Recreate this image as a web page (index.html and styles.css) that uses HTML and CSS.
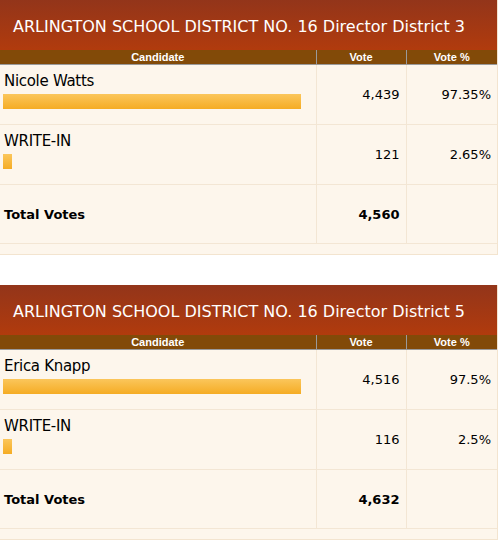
FILE: index.html
```html
<!DOCTYPE html>
<html>
<head>
<meta charset="utf-8">
<link rel="stylesheet" href="styles.css">
</head>
<body>
<div class="race">
  <div class="race-title">ARLINGTON SCHOOL DISTRICT NO. 16 Director District 3</div>
  <table class="results">
    <colgroup><col class="c-cand"><col class="c-vote"><col class="c-pct"></colgroup>
    <thead><tr><th>Candidate</th><th>Vote</th><th>Vote %</th></tr></thead>
    <tbody>
      <tr><td class="cand"><div class="name">Nicole Watts</div><div class="bar" style="width:298px"></div></td><td class="num">4,439</td><td class="num">97.35%</td></tr>
      <tr><td class="cand"><div class="name">WRITE-IN</div><div class="bar" style="width:9px"></div></td><td class="num">121</td><td class="num">2.65%</td></tr>
      <tr class="total"><td class="cand">Total Votes</td><td class="num">4,560</td><td class="num"></td></tr>
    </tbody>
  </table>
  <div class="race-foot"></div>
</div>
<div class="race">
  <div class="race-title">ARLINGTON SCHOOL DISTRICT NO. 16 Director District 5</div>
  <table class="results">
    <colgroup><col class="c-cand"><col class="c-vote"><col class="c-pct"></colgroup>
    <thead><tr><th>Candidate</th><th>Vote</th><th>Vote %</th></tr></thead>
    <tbody>
      <tr><td class="cand"><div class="name">Erica Knapp</div><div class="bar" style="width:298px"></div></td><td class="num">4,516</td><td class="num">97.5%</td></tr>
      <tr><td class="cand"><div class="name">WRITE-IN</div><div class="bar" style="width:9px"></div></td><td class="num">116</td><td class="num">2.5%</td></tr>
      <tr class="total"><td class="cand">Total Votes</td><td class="num">4,632</td><td class="num"></td></tr>
    </tbody>
  </table>
  <div class="race-foot"></div>
</div>
</body>
</html>
```
FILE: styles.css
```css
html, body {
  margin: 0;
  padding: 0;
  background: #ffffff;
}
body {
  font-family: "DejaVu Sans", Verdana, sans-serif;
  color: #000;
}
.race {
  width: 497px;
  border-right: 1px solid #f3e4cf;
  border-bottom: 1px solid #f3e4cf;
  background: #fdf6ec;
  margin-bottom: 30px;
}
.race-title {
  height: 50px;
  box-sizing: border-box;
  padding: 17px 0 0 13px;
  background: linear-gradient(to bottom, #93351a, #b13b0d);
  color: #ffffff;
  font-size: 16px;
  line-height: 20px;
  white-space: nowrap;
}
.results {
  width: 100%;
  border-collapse: collapse;
  table-layout: fixed;
}
.c-cand { width: 316px; }
.c-vote { width: 90px; }
.c-pct { width: 91px; }
.results th {
  background: #824a08;
  color: #fff;
  font-family: "Liberation Sans", Arial, sans-serif;
  font-weight: bold;
  font-size: 11px;
  line-height: 14px;
  height: 14px;
  padding: 0;
  border-bottom: 1px solid #9a9a9a;
  border-left: 1px solid #9a9a9a;
}
.results th:first-child { border-left: none; }
.results td {
  height: 59px;
  padding: 0;
  border-top: 1px solid #f3e6d4;
  border-left: 1px solid #f3e6d4;
  vertical-align: middle;
}
.results tbody tr:first-child td { border-top: none; }
.results td.cand {
  border-left: none;
  padding: 0 3px;
  vertical-align: top;
}
.name {
  font-size: 15px;
  line-height: 18px;
  letter-spacing: -0.3px;
  margin: 7px 0 0 1px;
}
.bar {
  height: 15px;
  margin-top: 4px;
  background: linear-gradient(to bottom, #fbc65b, #f5ac24);
}
.num {
  text-align: right;
  font-size: 13px;
  padding-right: 6px !important;
}
.results .total td {
  height: 58px;
  font-weight: bold;
  font-size: 13px;
  vertical-align: middle;
  border-bottom: 1px solid #f3e6d4;
}
.total td.cand {
  padding-left: 4px;
}
.race-foot {
  height: 10px;
}
```
